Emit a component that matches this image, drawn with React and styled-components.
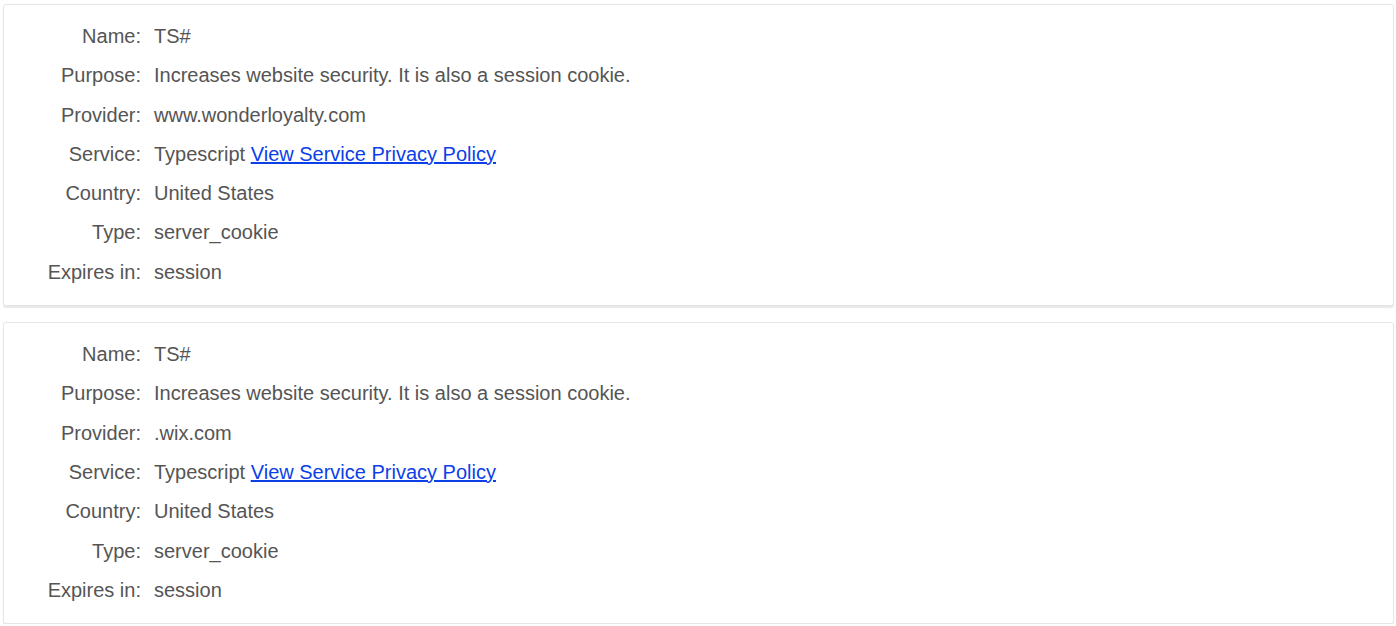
import React from 'react';
import styled, { createGlobalStyle } from 'styled-components';

const GlobalStyle = createGlobalStyle`
  body {
    margin: 0;
    background: #fff;
    font-family: "Liberation Sans", Arial, sans-serif;
  }
`;

const Page = styled.div`
  display: flex;
  flex-direction: column;
  gap: 16px;
  padding: 4px 2px 0 3px;
`;

const Card = styled.div`
  background: #fff;
  border: 1px solid #e6e6e6;
  border-radius: 3px;
  box-shadow: 0 2px 1px rgba(0, 0, 0, 0.09);
  padding: 12px 0 13px;
`;

const Row = styled.div`
  display: grid;
  grid-template-columns: 137px 1fr;
  column-gap: 13px;
  line-height: 39.3px;
  font-size: 20px;
  color: #555;
`;

const Label = styled.span`
  text-align: right;
`;

const Value = styled.span``;

const Link = styled.a`
  color: #0b3fe8;
  text-decoration: underline;
`;

const cookies = [
  { provider: 'www.wonderloyalty.com' },
  { provider: '.wix.com' },
];

export default function App() {
  return (
    <>
      <GlobalStyle />
      <Page>
        {cookies.map((c, i) => (
          <Card key={i}>
            <Row><Label>Name:</Label><Value>TS#</Value></Row>
            <Row><Label>Purpose:</Label><Value>Increases website security. It is also a session cookie.</Value></Row>
            <Row><Label>Provider:</Label><Value>{c.provider}</Value></Row>
            <Row>
              <Label>Service:</Label>
              <Value>Typescript <Link href="#">View Service Privacy Policy</Link></Value>
            </Row>
            <Row><Label>Country:</Label><Value>United States</Value></Row>
            <Row><Label>Type:</Label><Value>server_cookie</Value></Row>
            <Row><Label>Expires in:</Label><Value>session</Value></Row>
          </Card>
        ))}
      </Page>
    </>
  );
}
